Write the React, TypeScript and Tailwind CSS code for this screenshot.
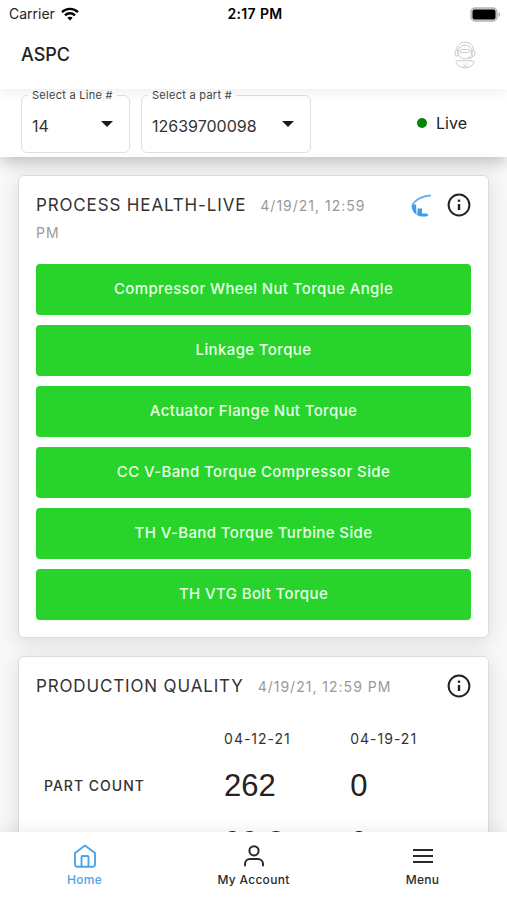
import { useState } from 'react';
import type { ReactNode } from 'react';

const LINES = ['14', '15', '16'];
const PARTS = ['12639700098', '12639700099'];

const STATIONS = [
  'Compressor Wheel Nut Torque Angle',
  'Linkage Torque',
  'Actuator Flange Nut Torque',
  'CC V-Band Torque Compressor Side',
  'TH V-Band Torque Turbine Side',
  'TH VTG Bolt Torque',
];

const QUALITY = [
  { label: 'PART COUNT', values: ['262', '0'] },
  { label: '', values: ['99.2', '0'] },
];

function WifiIcon() {
  return (
    <svg width="18" height="14" viewBox="0 0 18 14" fill="none" stroke="#000" strokeWidth="2.4">
      <path d="M1 5.2C5.4 .8 12.6 .8 17 5.2" />
      <path d="M4 8.4c2.8-2.8 7.2-2.8 10 0" />
      <path d="M9 13.4 6.3 10.7c1.5-1.4 3.9-1.4 5.4 0z" fill="#000" stroke="none" />
    </svg>
  );
}

function BatteryIcon() {
  return (
    <svg width="31" height="15" viewBox="0 0 31 15">
      <rect x="1" y="1" width="26" height="13" rx="4" fill="#ddd" stroke="#b4b4b4" strokeWidth="1.4" />
      <rect x="2.5" y="2.5" width="23" height="10" rx="2" fill="#000" />
      <path d="M28.6 5.2c2 .8 2 3.8 0 4.6z" fill="#aaa" />
    </svg>
  );
}

function AssistantIcon() {
  return (
    <svg width="22" height="28" viewBox="0 0 22 28" fill="none" stroke="#c4c4c4" strokeWidth="0.9">
      <path d="M2.6 9.5C2.6 4.4 6.2 1.2 11 1.2s8.4 3.2 8.4 8.3" />
      <circle cx="11" cy="11" r="7" />
      <rect x="1.2" y="9" width="2.8" height="6" rx="1.3" />
      <rect x="18" y="9" width="2.8" height="6" rx="1.3" />
      <rect x="6" y="8.6" width="10" height="3" rx="1.5" />
      <path d="M19 15c-.8 1.8-3 2.4-5.5 2.4" />
      <path d="M3.5 19.8h15c1.3 0 1.6 1.2 1.1 2.2-1.4 3-4.6 4.8-8.6 4.8S3.8 25 2.4 22c-.5-1-.2-2.2 1.1-2.2z" />
      <path d="M7.5 23h1M10.5 23h1M13.5 23h1M9 25h4" />
    </svg>
  );
}

function TrendIcon() {
  return (
    <svg width="22" height="23" viewBox="0 0 22 23">
      <path d="M1.5 10.5C4.5 6 10 2.4 20 1.4" fill="none" stroke="#5aacf0" strokeWidth="1.8" />
      <path d="M.8 10.5h4.4v10C2.2 18.8.2 14.5.8 10.5z" fill="#3b9cf0" />
      <path d="M5.2 18h1.3v3.500L5.200 20.500z" fill="#8cc5f6" />
      <path d="M6.500 14.500h4.500v8c-1.700 0-3.200-.4-4.500-1.200z" fill="#3b9cf0" />
      <path d="M11 19.500h5l1.500 1.700-2 1.300H11z" fill="#3b9cf0" />
    </svg>
  );
}

function InfoIcon() {
  return (
    <svg width="24" height="24" viewBox="0 0 24 24" fill="none" stroke="#222" strokeWidth="2">
      <circle cx="12" cy="12" r="10.4" />
      <path d="M12 11v6" strokeWidth="2.4" />
      <path d="M12 6.6v2.2" strokeWidth="2.4" />
    </svg>
  );
}

function HomeIcon() {
  return (
    <svg width="24" height="24" viewBox="0 0 24 24" fill="none" stroke="currentColor" strokeWidth="1.9" strokeLinejoin="round">
      <path d="M2 9 12 1.5 22 9V20.500a2.200 2.200 0 0 1-2.200 2.200H4.200A2.200 2.200 0 0 1 2 20.500z" />
      <path d="M8.5 22.5v-9.500a1 1 0 0 1 1-1h5a1 1 0 0 1 1 1v9.500" />
    </svg>
  );
}

function UserIcon() {
  return (
    <svg width="24" height="24" viewBox="0 0 24 24" fill="none" stroke="currentColor" strokeWidth="2" strokeLinecap="round">
      <circle cx="12" cy="6.8" r="4.6" />
      <path d="M3 21.5v-1.5a5 5 0 0 1 5-5h8a5 5 0 0 1 5 5v1.5" />
    </svg>
  );
}

function MenuIcon() {
  return (
    <svg width="24" height="24" viewBox="0 0 24 24" stroke="currentColor" strokeWidth="2">
      <path d="M2 6h20M2 12h20M2 18h20" />
    </svg>
  );
}

type SelectFieldProps = {
  id: string;
  label: string;
  value: string;
  options: string[];
  className: string;
  onChange: (value: string) => void;
};

function SelectField({ id, label, value, options, className, onChange }: SelectFieldProps) {
  return (
    <fieldset className={`relative h-16 rounded-md border border-[#e0e0e0] ${className}`}>
      <legend className="ml-[6px] px-1 text-[11px] leading-3 tracking-wide text-[#444]">
        <label htmlFor={id}>{label}</label>
      </legend>
      <select
        id={id}
        value={value}
        onChange={(e) => onChange(e.target.value)}
        className="h-[50px] w-full appearance-none bg-transparent pl-[10px] pr-8 text-base text-[#333] focus:outline-none"
      >
        {options.map((option) => (
          <option key={option}>{option}</option>
        ))}
      </select>
      <svg className="pointer-events-none absolute right-4 top-5" width="12" height="6" viewBox="0 0 12 6">
        <path d="M0 0h12L6 6z" fill="#1a1a1a" />
      </svg>
    </fieldset>
  );
}

type CardProps = {
  title: string;
  time: string;
  actions?: ReactNode;
  children: ReactNode;
};

function Card({ title, time, actions, children }: CardProps) {
  return (
    <section className="rounded-md border border-[#dcdcdc] bg-white px-[17px] pb-[17px] pt-4 shadow-[0_4px_20px_rgba(0,0,0,0.12)]">
      <div className="flex items-start justify-between gap-6">
        <div className="leading-[27px]">
          <h2 className="mr-[14px] inline text-[17px] tracking-wider text-[#333]">{title}</h2>
          <span className="text-sm tracking-[1px] text-[#999]">{time}</span>
        </div>
        <div className="flex shrink-0 gap-[14px] pt-px">
          {actions}
          <button type="button" aria-label={`About ${title.toLowerCase()}`}>
            <InfoIcon />
          </button>
        </div>
      </div>
      {children}
    </section>
  );
}

function NavItem({ label, icon, active }: { label: string; icon: ReactNode; active?: boolean }) {
  return (
    <a
      href="#"
      className={`flex flex-1 flex-col items-center gap-1 text-xs font-medium tracking-wide ${active ? 'text-[#4da3ea]' : 'text-[#2a2a2a]'}`}
    >
      {icon}
      {label}
    </a>
  );
}

export default function App() {
  const [line, setLine] = useState('14');
  const [part, setPart] = useState('12639700098');

  return (
    <div className="flex h-screen flex-col overflow-hidden bg-[#f8f8f8] font-['Inter','Liberation_Sans',sans-serif] text-[#222]">
      {/* Status bar + title */}
      <header className="relative z-20 bg-white shadow-[0_2px_12px_rgba(0,0,0,0.08)]">
        <div className="grid h-7 grid-cols-3 items-center pl-[9px] pr-[6px] text-sm">
          <div className="flex items-center gap-1.5">
            Carrier <WifiIcon />
          </div>
          <div className="text-center font-semibold tracking-wide text-black">2:17 PM</div>
          <div className="flex justify-end">
            <BatteryIcon />
          </div>
        </div>
        <div className="flex h-[61px] items-center justify-between pb-2 pl-[21px] pr-[31px]">
          <h1 className="text-lg font-medium">ASPC</h1>
          <button type="button" aria-label="Assistant">
            <AssistantIcon />
          </button>
        </div>
      </header>

      {/* Line / part filters */}
      <div className="relative z-10 flex h-[68px] items-start justify-between bg-white pl-[21px] pr-10 shadow-[0_8px_14px_-2px_rgba(0,0,0,0.22)]">
        <div className="flex gap-[11px]">
          <SelectField id="line" label="Select a Line #" value={line} options={LINES} onChange={setLine} className="w-[109px]" />
          <SelectField id="part" label="Select a part #" value={part} options={PARTS} onChange={setPart} className="w-[170px]" />
        </div>
        <div className="flex items-center gap-[9px] self-center text-base">
          <span className="size-[10px] rounded-full bg-[#078307]" />
          Live
        </div>
      </div>

      <main className="flex min-h-0 flex-1 flex-col gap-[18px] overflow-y-auto px-[18px] pt-[18px] [scrollbar-width:none]">
        <Card
          title="PROCESS HEALTH-LIVE"
          time="4/19/21, 12:59 PM"
          actions={
            <button type="button" aria-label="Show trend">
              <TrendIcon />
            </button>
          }
        >
          <div className="mt-[18px] flex flex-col gap-[10px]">
            {STATIONS.map((station) => (
              <button
                key={station}
                type="button"
                className="h-[51px] rounded bg-[#28d42c] text-[15px] font-medium tracking-wide text-[#e6ffe6]"
              >
                {station}
              </button>
            ))}
          </div>
        </Card>

        <Card title="PRODUCTION QUALITY" time="4/19/21, 12:59 PM">
          <table className="mt-[21px] w-full table-fixed text-left">
            <thead>
              <tr className="h-9 text-sm tracking-[1px] text-[#333]">
                <th className="w-[43%]" />
                <th className="w-[29%] pl-px font-normal">04-12-21</th>
                <th className="pl-px font-normal">04-19-21</th>
              </tr>
            </thead>
            <tbody>
              {QUALITY.map((row, i) => (
                <tr key={i} className="h-[57px]">
                  <th className="pl-2 text-sm font-medium tracking-[1px] text-[#333]">{row.label}</th>
                  {row.values.map((value, j) => (
                    <td key={j} className="pl-px font-['Liberation_Sans',sans-serif] text-[31px] leading-8">
                      {value}
                    </td>
                  ))}
                </tr>
              ))}
            </tbody>
          </table>
        </Card>
      </main>

      <nav className="relative z-10 flex h-[68px] shrink-0 bg-white pt-3 shadow-[0_-2px_14px_rgba(0,0,0,0.07)]">
        <NavItem label="Home" icon={<HomeIcon />} active />
        <NavItem label="My Account" icon={<UserIcon />} />
        <NavItem label="Menu" icon={<MenuIcon />} />
      </nav>
    </div>
  );
}
